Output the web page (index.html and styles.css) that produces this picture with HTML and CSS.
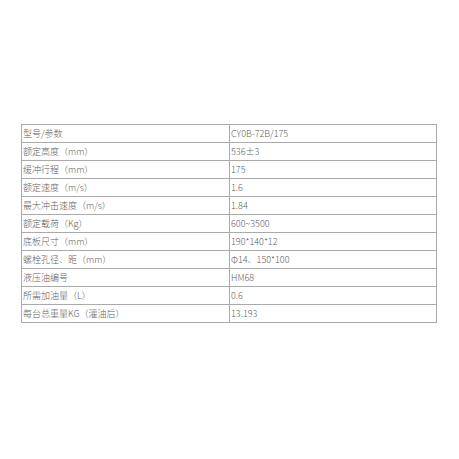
FILE: index.html
```html
<!DOCTYPE html>
<html>
<head>
<meta charset="utf-8">
<link rel="stylesheet" href="styles.css">
</head>
<body>
<div class="page">
<table class="spec">
<tr><td>型号/参数</td><td>CY0B-72B/175</td></tr>
<tr><td>额定高度（mm）</td><td>536±3</td></tr>
<tr><td>缓冲行程（mm）</td><td>175</td></tr>
<tr><td>额定速度（m/s）</td><td>1.6</td></tr>
<tr><td>最大冲击速度（m/s）</td><td>1.84</td></tr>
<tr><td>额定载荷（Kg）</td><td>600~3500</td></tr>
<tr><td>底板尺寸（mm）</td><td>190*140*12</td></tr>
<tr><td>螺栓孔径、距（mm）</td><td>Φ14、150*100</td></tr>
<tr><td>液压油编号</td><td>HM68</td></tr>
<tr><td>所需加油量（L）</td><td>0.6</td></tr>
<tr><td>每台总重量KG（灌油后）</td><td>13.193</td></tr>
</table>
</div>
</body>
</html>
```
FILE: styles.css
```css
html, body { margin: 0; padding: 0; background: #fff; }
.page {
  width: 459px;
  height: 459px;
  padding: 124px 0 0 21px;
  box-sizing: border-box;
}
.spec {
  border-collapse: collapse;
  width: 416px;
  table-layout: fixed;
  font-family: "Noto Sans CJK SC", "DejaVu Sans", sans-serif;
  font-size: 9px;
  font-weight: 300;
  color: #5e5e5e;
}
.spec td {
  border: 1px solid #aaaaaa;
  height: 17px;
  padding: 0 0 0 1px;
  line-height: 17px;
  white-space: nowrap;
  overflow: hidden;
}
.spec td:first-child { width: 206px; }
```
